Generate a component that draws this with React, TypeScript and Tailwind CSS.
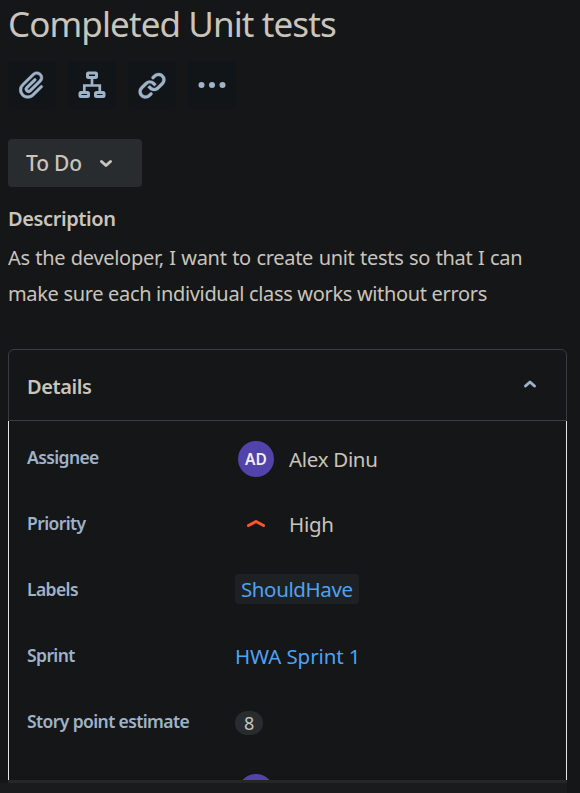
import type { ReactNode } from "react";

function Tool({ children }: { children: ReactNode }) {
  return (
    <button className="flex h-12 w-12 items-center justify-center rounded-[4px] bg-[#111518] text-[#9fb4cb]">
      {children}
    </button>
  );
}

function Row({ label, children }: { label: string; children: ReactNode }) {
  return (
    <div className="flex h-[66px] items-center">
      <div className="w-[208px] pb-1 text-[17.5px] leading-6 font-semibold tracking-[-0.6px] text-[#9fb2c8]">{label}</div>
      <div className="flex items-center text-[20.5px] leading-7 tracking-[-0.3px] text-[#c9c4bc]">{children}</div>
    </div>
  );
}

export default function App() {
  return (
    <div className="flex h-[793px] w-[580px] flex-col overflow-hidden bg-[#141618] pl-2 font-['Noto_Sans','Open_Sans',sans-serif] text-[#c9c4bc]">
      <h1 className="h-[61px] text-[35px] leading-[47px] font-normal tracking-[-0.9px] whitespace-nowrap">Completed Unit tests</h1>

      <div className="flex gap-3">
        <Tool>
          <svg className="ml-px" width="37" height="36" viewBox="0 0 24 24" fill="currentColor" stroke="currentColor" strokeWidth="0.3">
            <path d="M11.643 17.965c-1.53 1.495-4.016 1.496-5.542.004a3.773 3.773 0 0 1 .002-5.412l7.147-6.985a2.316 2.316 0 0 1 3.22.004 2.186 2.186 0 0 1 .004 3.140l-6.630 6.480a.648.648 0 0 1-.899-.003.607.607 0 0 1-.001-.873l5.320-5.199a.9.900 0 0 0-1.258-1.287l-5.320 5.199a2.406 2.406 0 0 0 .001 3.447 2.450 2.450 0 0 0 3.416.003l6.630-6.480a3.986 3.986 0 0 0-.005-5.715 4.117 4.117 0 0 0-5.736-.003l-7.147 6.985a5.573 5.573 0 0 0-.001 7.987c2.226 2.176 5.831 2.176 8.058-.001l5.670-5.541a.9.900 0 0 0-1.258-1.287z" />
          </svg>
        </Tool>
        <Tool>
          <svg width="36" height="36" viewBox="0 0 36 36" fill="none" stroke="currentColor" strokeWidth="3">
            <rect x="13.500" y="6" width="9" height="4.500" rx="1" />
            <rect x="6" y="25.500" width="8.500" height="4" rx="1" />
            <rect x="21.500" y="25.500" width="8.500" height="4" rx="1" />
            <path d="M18 10v8M10.300 25v-6.500h15.500V25" strokeWidth="2.700" />
          </svg>
        </Tool>
        <Tool>
          <svg width="36" height="36" viewBox="0 0 24 24" fill="currentColor" stroke="currentColor" strokeWidth="0.2">
            <path d="M12.856 5.457l-.937.920a1.002 1.002 0 0 0 0 1.437 1.047 1.047 0 0 0 1.463 0l.984-.966c.967-.950 2.542-1.135 3.602-.288a2.540 2.540 0 0 1 .203 3.810l-2.903 2.852a2.646 2.646 0 0 1-3.696 0l-1.110-1.090L9 13.570l1.108 1.089c1.822 1.788 4.802 1.788 6.622 0l2.905-2.852a4.558 4.558 0 0 0-.357-6.820c-1.893-1.517-4.695-1.226-6.422.470z" />
            <path d="M11.144 19.543l.937-.920a1.002 1.002 0 0 0 0-1.437 1.047 1.047 0 0 0-1.462 0l-.985.966c-.967.950-2.542 1.135-3.602.288a2.540 2.540 0 0 1-.203-3.810l2.903-2.852a2.646 2.646 0 0 1 3.696 0l1.110 1.090L15 11.430l-1.108-1.089c-1.822-1.788-4.802-1.788-6.622 0l-2.905 2.852a4.558 4.558 0 0 0 .357 6.820c1.893 1.517 4.695 1.226 6.422-.470z" />
          </svg>
        </Tool>
        <Tool>
          <svg width="36" height="36" viewBox="0 0 36 36" fill="currentColor">
            <circle cx="7.500" cy="18" r="3" />
            <circle cx="18" cy="18" r="3" />
            <circle cx="28.500" cy="18" r="3" />
          </svg>
        </Tool>
      </div>

      <button className="mt-[30px] flex h-12 w-[134px] items-center rounded-[4px] bg-[#282c2e] pl-[18px] text-[21px] font-medium tracking-[-0.2px]">
        <span className="w-[72px] pt-0.5 text-left">To Do</span>
        <svg className="-mt-px" width="16" height="14" viewBox="0 0 16 14" fill="none" stroke="currentColor" strokeWidth="3" strokeLinecap="round" strokeLinejoin="round">
          <path d="M3.500 5.500L8 9.500L12.500 5.500" />
        </svg>
      </button>

      <h2 className="mt-[18px] text-[20px] leading-7 font-semibold tracking-[-0.4px]">Description</h2>
      <p className="mt-[7px] text-[20px] leading-9 whitespace-nowrap">
        <span className="tracking-[-0.3px] [word-spacing:0.65px]">As the developer, I want to create unit tests so that I can</span>
        <br />
        <span className="tracking-[-0.33px]">make sure each individual class works without errors</span>
      </p>

      <section className="mt-[37px] flex h-[431px] w-[559px] shrink-0 flex-col">
        <div className="flex h-[72px] shrink-0 items-center justify-between rounded-t-[6px] border border-[#393d3f] pr-7 pl-[18px]">
          <h2 className="pt-[3px] text-[20px] leading-7 font-semibold tracking-[-0.4px]">Details</h2>
          <svg className="-mt-0.5 text-[#9fb2c8]" width="16" height="14" viewBox="0 0 16 14" fill="none" stroke="currentColor" strokeWidth="3" strokeLinecap="round" strokeLinejoin="round">
            <path d="M3.500 9L8 5L12.500 9" />
          </svg>
        </div>
        <div className="h-[359px] overflow-hidden border-x border-[#e9e6e2] pt-[5px] pl-[18px]">
          <Row label="Assignee">
            <span className="ml-[3px] flex h-9 w-9 items-center justify-center rounded-full bg-[#5243aa] pb-px text-[15.5px] font-semibold tracking-normal text-[#f0eeee]">AD</span>
            <span className="ml-[15px]">Alex Dinu</span>
          </Row>
          <Row label="Priority">
            <svg className="-mt-1 ml-[9px]" width="24" height="24" viewBox="0 0 24 24" fill="none" stroke="#ff5630" strokeWidth="3" strokeLinecap="round" strokeLinejoin="round">
              <path d="M4.500 14.500L12 10.500L19.500 14.500" />
            </svg>
            <span className="ml-[21px] pb-0.5">High</span>
          </Row>
          <Row label="Labels">
            <span className="-mt-1 h-[30px] rounded-[4px] bg-[#1e2123] px-1.5 leading-[30px] tracking-[-0.4px] text-[#4ea2f4]">ShouldHave</span>
          </Row>
          <Row label="Sprint">
            <span className="pb-0.5 tracking-[-0.1px] text-[#4ea2f4]">HWA Sprint 1</span>
          </Row>
          <Row label="Story point estimate">
            <span className="flex h-6 w-7 items-center justify-center rounded-full bg-[#282c2e] text-[18px]">8</span>
          </Row>
          <div className="mt-[18px] ml-[211px] h-9 w-9 rounded-full bg-[#5243aa]" />
        </div>
      </section>
      <div className="h-[3px] w-[559px] shrink-0 bg-[#242628]" />
      <div className="-ml-2 h-[10px] w-[567px] shrink-0 bg-[#191b1d]" />
    </div>
  );
}
